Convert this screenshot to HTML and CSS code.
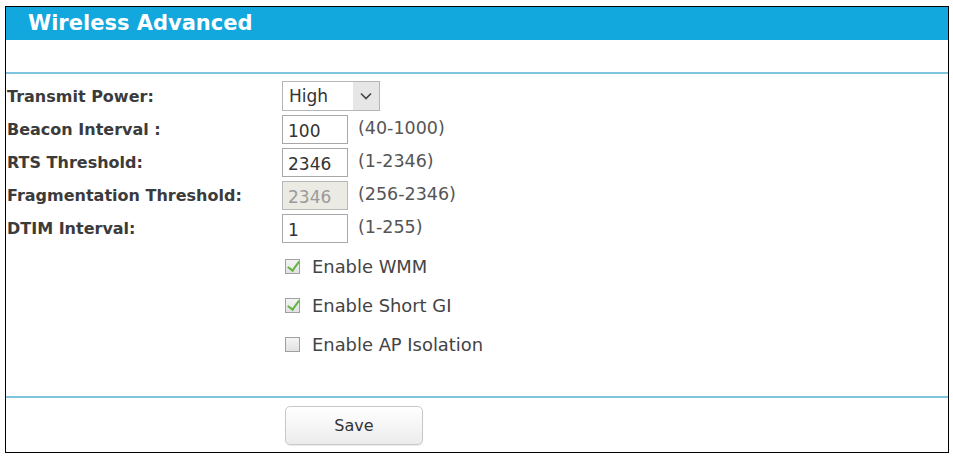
FILE: index.html
```html
<!DOCTYPE html>
<html lang="en">
<head>
  <meta charset="UTF-8" />
  <title>Wireless Advanced</title>
  <link rel="stylesheet" href="styles.css">
</head>
<body>
  <div class="frame">
    <div class="title-bar">Wireless Advanced</div>
    <div class="spacer"></div>
    <hr class="sep">

    <form class="settings" onsubmit="return false;">
      <div class="row first">
        <label class="lbl" for="txPower">Transmit Power:</label>
        <div class="select-wrap">
          <select id="txPower">
            <option>High</option>
            <option>Middle</option>
            <option>Low</option>
          </select>
          <span class="arrow">
            <svg width="12" height="8" viewBox="0 0 12 8"><path d="M1 1.5 L6 6.5 L11 1.5" fill="none" stroke="#444" stroke-width="1.6"/></svg>
          </span>
        </div>
      </div>
      <div class="row">
        <label class="lbl" for="beacon">Beacon Interval :</label>
        <input class="num" id="beacon" type="text" value="100">
        <span class="range">(40-1000)</span>
      </div>
      <div class="row">
        <label class="lbl" for="rts">RTS Threshold:</label>
        <input class="num" id="rts" type="text" value="2346">
        <span class="range">(1-2346)</span>
      </div>
      <div class="row">
        <label class="lbl" for="frag">Fragmentation Threshold:</label>
        <input class="num" id="frag" type="text" value="2346" disabled>
        <span class="range">(256-2346)</span>
      </div>
      <div class="row">
        <label class="lbl" for="dtim">DTIM Interval:</label>
        <input class="num" id="dtim" type="text" value="1">
        <span class="range">(1-255)</span>
      </div>

      <div class="check-row">
        <input type="checkbox" id="wmm" checked>
        <label for="wmm">Enable WMM</label>
      </div>
      <div class="check-row">
        <input type="checkbox" id="sgi" checked>
        <label for="sgi">Enable Short GI</label>
      </div>
      <div class="check-row">
        <input type="checkbox" id="apiso">
        <label for="apiso">Enable AP Isolation</label>
      </div>

      <hr class="sep bottom">

      <div class="actions">
        <button type="submit" class="btn-save">Save</button>
      </div>
    </form>
  </div>
</body>
</html>
```

FILE: styles.css
```css
body {
  margin: 0;
  padding: 6px 4px 0 5px;
  background: #fff;
  font-family: "DejaVu Sans", Verdana, sans-serif;
  color: #333;
}
.frame {
  border: 1px solid #000;
  box-sizing: border-box;
  height: 447px;
}
.title-bar {
  background-color: #12a7dd;
  color: #fff;
  font-weight: bold;
  font-size: 21px;
  height: 33px;
  line-height: 33px;
  padding-left: 22px;
}
.spacer {
  height: 32px;
}
.sep {
  margin: 0;
  border: none;
  height: 2px;
  background: #7fc5de;
}
.settings {
  padding-top: 7px;
}
.row {
  display: flex;
  align-items: center;
  height: 29px;
  margin-bottom: 4px;
}
.row.first {
  height: 30px;
}
.lbl {
  width: 275px;
  padding-left: 1px;
  font-weight: bold;
  font-size: 16px;
  color: #3b3b3b;
}
.select-wrap {
  position: relative;
  width: 98px;
  height: 30px;
}
.select-wrap select {
  appearance: none;
  -webkit-appearance: none;
  width: 100%;
  height: 100%;
  border: 1px solid #b5b5b5;
  background: #fff;
  font-family: inherit;
  font-size: 17px;
  color: #333;
  padding: 0 0 0 6px;
  margin: 0;
}
.arrow {
  position: absolute;
  top: 1px;
  right: 1px;
  width: 26px;
  height: 28px;
  background: #e6e6e6;
  display: flex;
  align-items: center;
  justify-content: center;
  pointer-events: none;
}
.num {
  width: 66px;
  height: 29px;
  box-sizing: border-box;
  border: 1px solid #a8a8a8;
  font-family: inherit;
  font-size: 17px;
  color: #333;
  padding: 2px 0 0 5px;
  margin: 0;
}
.num:disabled {
  background: #ebebe4;
  color: #9a9a9a;
  border-color: #b8b8b8;
}
.range {
  margin-left: 10px;
  margin-top: -4px;
  font-size: 17.5px;
  color: #555;
}
.check-row {
  display: flex;
  align-items: center;
  height: 39px;
  padding-left: 279px;
}
.check-row:first-of-type {
  margin-top: 2px;
}
.check-row input {
  appearance: none;
  -webkit-appearance: none;
  position: relative;
  width: 15px;
  height: 15px;
  margin: 0 12px 0 0;
  border: 1px solid #a0a0a0;
  background: linear-gradient(#f4f4f4, #e2e2e2);
  box-sizing: border-box;
}
.check-row input:checked::after {
  content: "";
  position: absolute;
  left: 4px;
  top: -1px;
  width: 5px;
  height: 10px;
  border-right: 2px solid #62b443;
  border-bottom: 2px solid #62b443;
  transform: rotate(36deg);
}
.check-row label {
  font-size: 17.9px;
  color: #444;
}
.sep.bottom {
  margin-top: 32px;
}
.actions {
  padding: 8px 0 0 279px;
}
.btn-save {
  cursor: pointer;
  width: 138px;
  height: 39px;
  border: 1px solid #c8c8c8;
  border-radius: 5px;
  background: linear-gradient(#ffffff, #ececec);
  font-family: inherit;
  font-size: 16px;
  color: #333;
  box-shadow: 0 1px 1px rgba(0,0,0,0.08);
}
```
